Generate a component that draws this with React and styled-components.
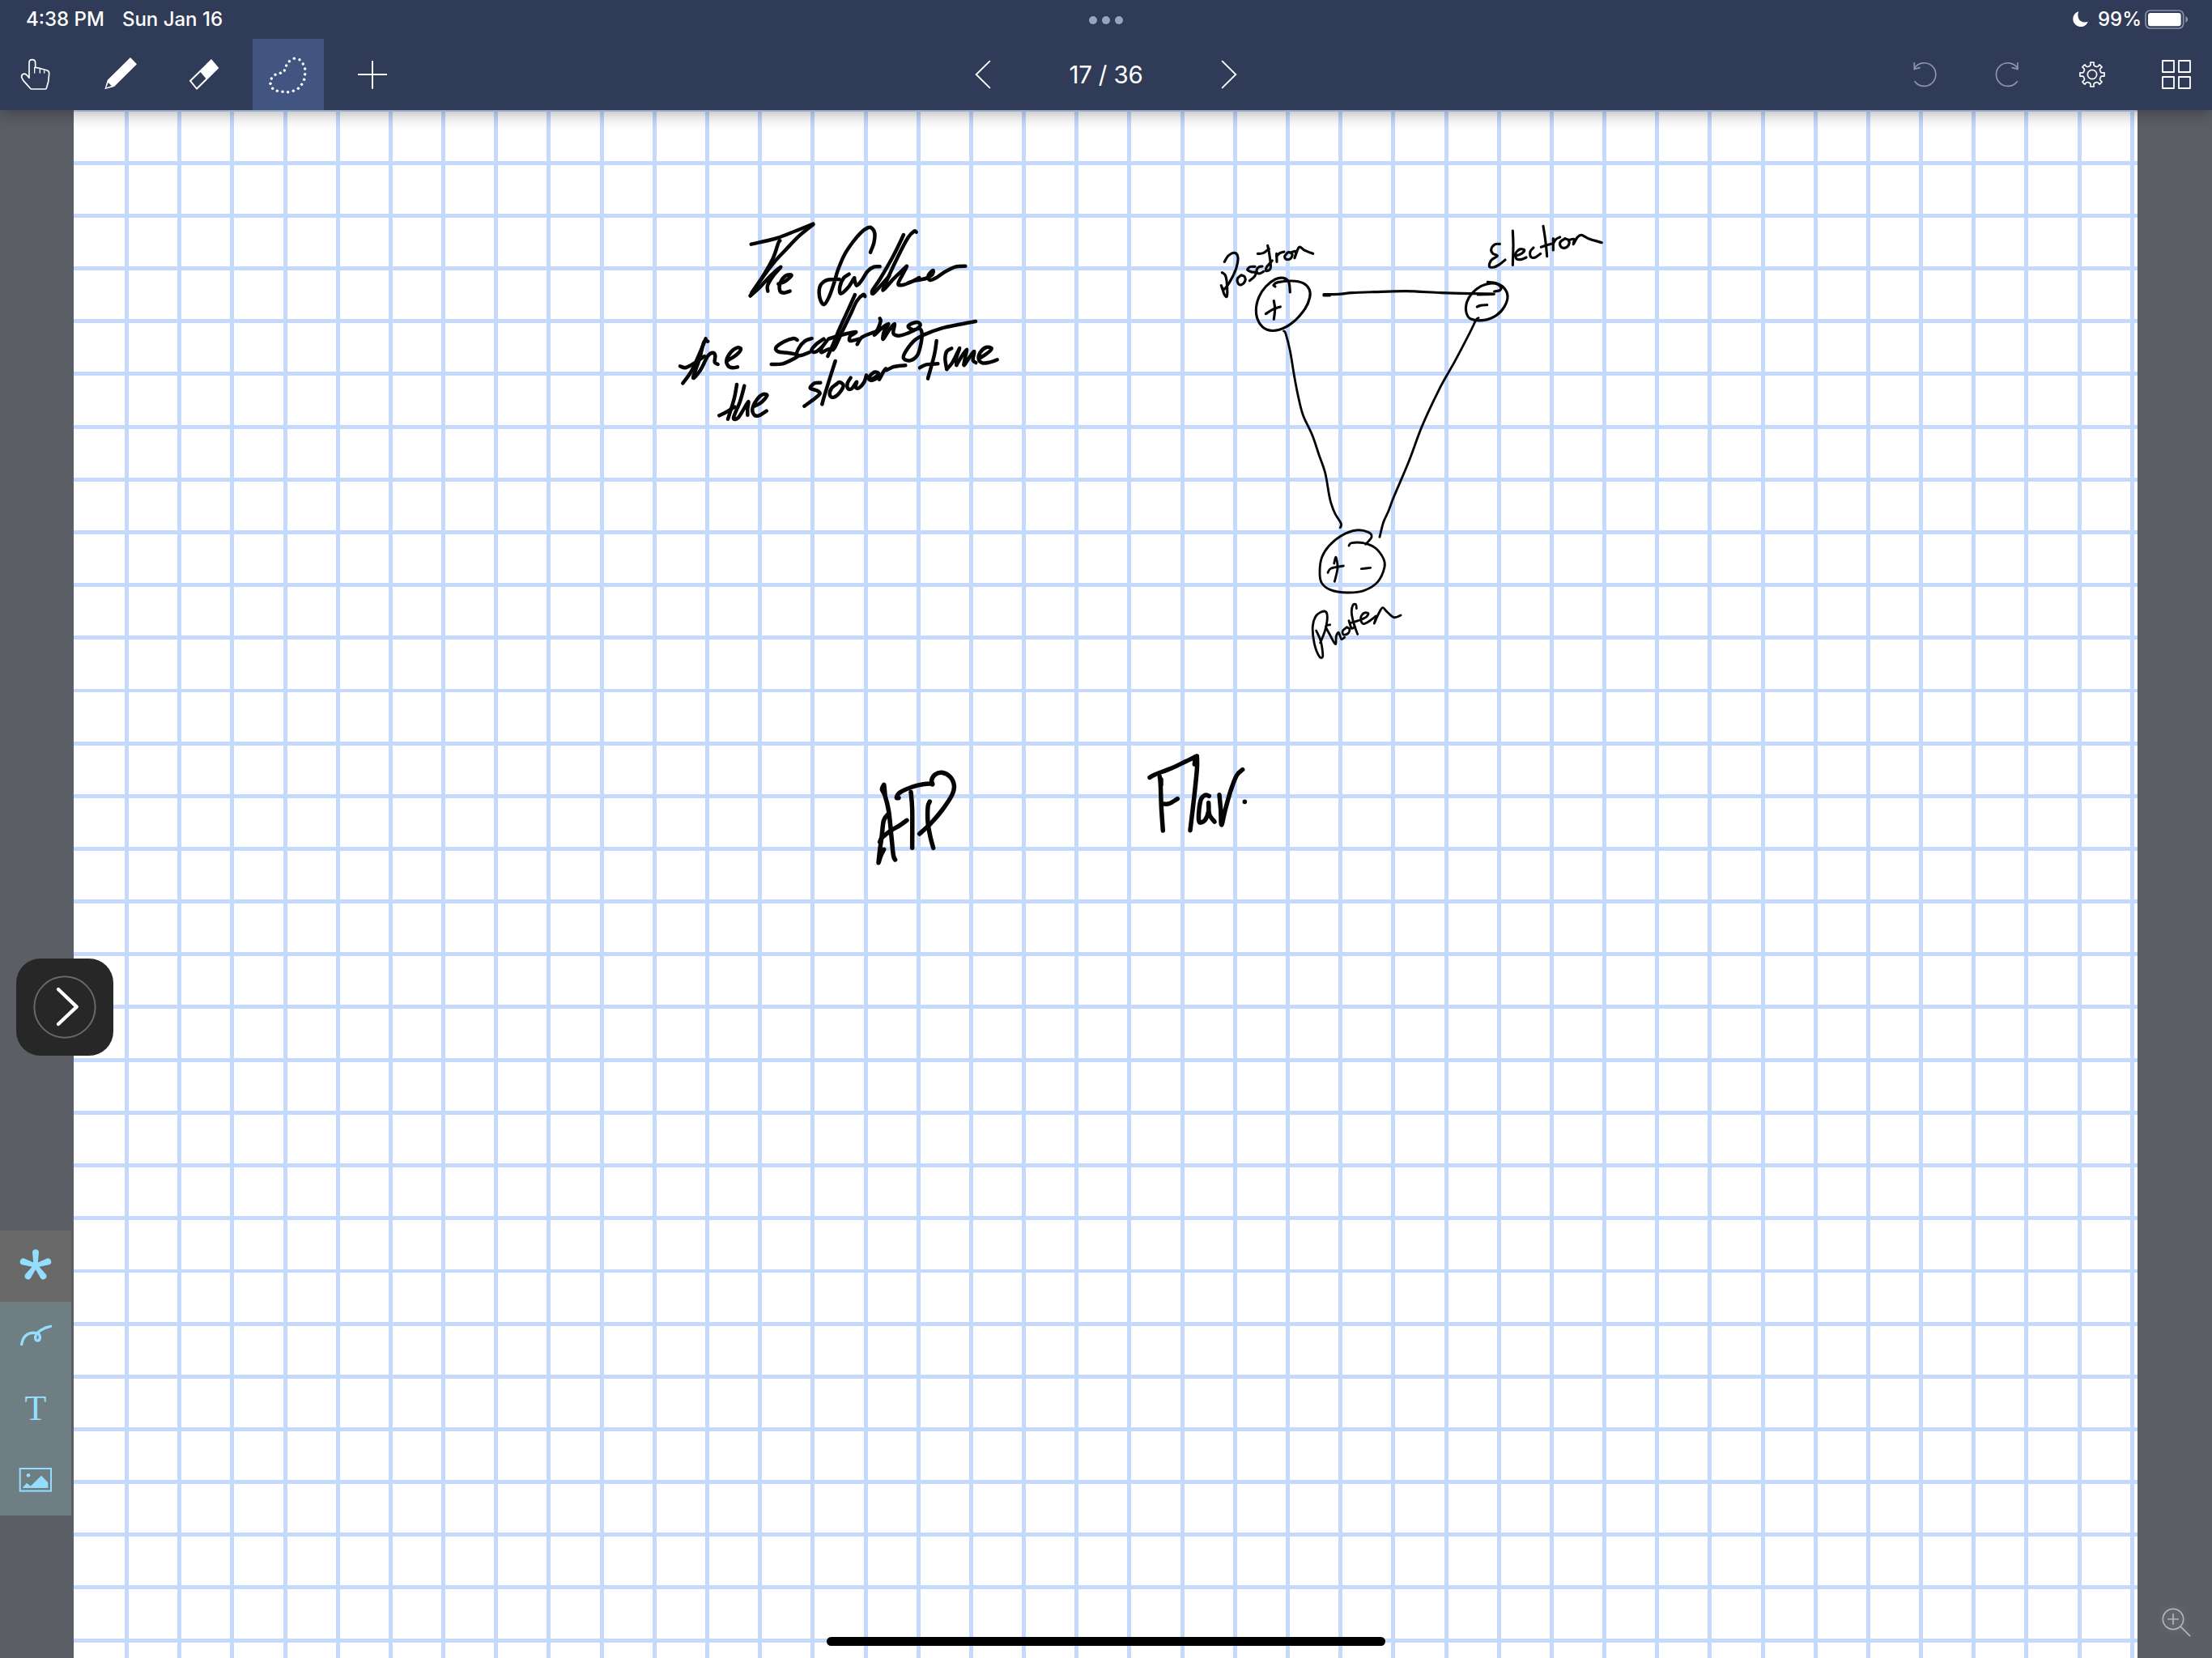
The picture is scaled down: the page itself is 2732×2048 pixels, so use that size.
import React from "react";
import styled, { createGlobalStyle, css } from "styled-components";

const GlobalStyle = createGlobalStyle`
  * { box-sizing: border-box; }
  body { margin: 0; overflow: hidden; background: #5c5e66; }
`;

const Screen = styled.div`
  position: relative;
  display: flex;
  flex-direction: column;
  width: 2732px;
  height: 2048px;
  overflow: hidden;
  font-family: Inter, "Liberation Sans", sans-serif;
  color: #fff;
`;

const Header = styled.header`
  position: relative;
  z-index: 2;
  flex: none;
  height: 136px;
  background: #303b57;
  box-shadow: 0 4px 20px rgba(0, 0, 0, 0.32);
`;

const StatusBar = styled.div`
  display: grid;
  grid-template-columns: 1fr auto 1fr;
  align-items: center;
  height: 48px;
  padding: 0 29px 0 32px;
`;

const StatusGroup = styled.div`
  display: flex;
  align-items: center;
  gap: ${(p) => p.$gap || 0}px;
  ${(p) => p.$end && css`justify-content: flex-end;`}
`;

const StatusText = styled.span`
  font-size: 24px;
  line-height: 48px;
  font-weight: 450;
  white-space: nowrap;
`;

const Dots = styled.div`
  display: flex;
  gap: 6px;
  padding: 2px 3px 0 0;
`;

const Dot = styled.i`
  width: 10px;
  height: 10px;
  border-radius: 50%;
  background: #98a4c2;
`;

const Toolbar = styled.div`
  display: grid;
  grid-template-columns: 1fr auto 1fr;
  height: 88px;
`;

const ToolGroup = styled.nav`
  display: flex;
  gap: 16px;
  ${(p) => p.$end && css`justify-content: flex-end;`}
`;

const PageNav = styled.div`
  display: flex;
  align-items: center;
`;

const PageCount = styled.span`
  width: 216px;
  text-align: center;
  font-size: 29.5px;
  font-weight: 400;
  letter-spacing: -0.2px;
  line-height: 88px;
`;

const ToolButton = styled.button`
  width: 88px;
  height: 88px;
  padding: 0;
  border: 0;
  display: block;
  color: ${(p) => (p.$muted ? "#9096a6" : "#fff")};
  background: ${(p) => (p.$active ? "#425480" : "transparent")};
`;

const Glyph = styled.svg`
  display: block;
  width: 88px;
  height: 88px;
  fill: none;
  stroke: currentColor;
  stroke-width: ${(p) => p.$weight || 5};
`;

const Workspace = styled.main`
  display: flex;
  flex: 1;
  min-height: 0;
`;

const Rail = styled.aside`
  display: flex;
  flex-direction: column;
  justify-content: flex-end;
  flex: none;
  width: ${(p) => p.$width}px;
  padding-bottom: ${(p) => p.$bottom || 0}px;
  background: #5c5e66;
`;

const Paper = styled.section`
  flex: none;
  width: 2549px;
  height: 1912px;
  background: #fff;
`;

const PaperDrawing = styled.svg`
  display: block;
`;

const LayerButton = styled.button`
  display: flex;
  align-items: center;
  justify-content: center;
  width: 88px;
  height: 88px;
  padding: 0;
  border: 0;
  color: #93defe;
  background: ${(p) => (p.$selected ? "#696969" : "#6f7e83")};
`;

const LetterT = styled.span`
  font-family: "Liberation Serif", "Times New Roman", serif;
  font-size: 44px;
  line-height: 88px;
`;

const ZoomButton = styled(ToolButton)`
  align-self: flex-end;
  color: #b5b5b5;
  filter: drop-shadow(0 0 5px rgba(255, 255, 255, 0.2));
`;

const Handle = styled.button`
  position: absolute;
  z-index: 3;
  left: 20px;
  top: 1184px;
  width: 120px;
  height: 120px;
  padding: 0;
  border: 0;
  border-radius: 30px;
  background: #272727;
`;

const HomeIndicator = styled.div`
  position: absolute;
  z-index: 3;
  left: 1021px;
  bottom: 15px;
  width: 690px;
  height: 11px;
  border-radius: 6px;
  background: #000;
`;

/* Graph paper */
const PITCH = 65.18;
const COLS = Array.from({ length: 39 }, (_, n) => Math.round(154 + n * PITCH));
const ROWS = Array.from({ length: 30 }, (_, i) => {
  const n = i - 1;
  const thin = n === 10 || n === 21;
  return { y: Math.round(198.6 + n * PITCH) + (thin ? 1 : 0), h: thin ? 4 : 5 };
});

/* Pen strokes, each a list of sampled points in thirds of a pixel */
const NOTES = [
  {
    x: 820, y: 250, w: 13.5,
    strokes: [
      "323,155 350,149 420,132 490,105 553,80",
      "553,82 500,125 450,177 410,220 370,272 320,346",
      "430,142 424,150 405,205 370,268 325,335",
      "320,346 352,318 395,272 433,239 405,272 384,308 385,329",
      "424,302 450,292 473,270 452,271 431,298 430,328 445,335 467,329",
      "765,185 778,150 781,115 770,95 755,94 730,112 700,147 670,192 645,250 630,300 612,350 594,378 580,362 575,330 582,304 604,288 650,285",
      "686,266 666,280 652,312 655,338 682,316 704,282 706,285 714,308 732,290 755,255 778,239 800,238",
      "888,120 850,198 800,285 773,325 775,338 800,312 835,272",
      "935,110 927,107 905,130 870,195 830,280 812,326 850,284 885,250 900,237 884,268 868,302 885,306 918,294 946,279",
      "905,298 930,290 970,282 994,268 997,252 980,270 985,288 1008,280 1040,258 1080,239 1117,236",
      "155,505 132,560 102,625 70,670",
      "60,607 82,612 118,592 150,570",
      "163,515 148,518 132,580 108,650 135,622 162,570 180,557 190,567 188,592 200,600",
      "235,586 265,568 285,545 272,538 248,555 232,585 238,606 255,613 273,610",
      "494,510 480,504 445,516 415,538 424,553 462,558 497,566 480,580 440,598 398,600",
      "548,504 522,514 500,540 492,566 512,566 540,555",
      "592,506 565,525 547,548 562,554 586,535 604,512 584,540 584,556 604,546 620,542",
      "708,342 684,395 652,465 625,530 607,570",
      "745,348 738,342 715,365 690,418 660,480 632,540 622,546",
      "610,506 655,492 711,480 690,496 690,513 722,506",
      "716,526 732,501 765,486 790,478",
      "800,430 803,440 794,466 780,492 802,470 832,450 816,478 812,507 834,474 855,450 850,485 872,494 905,484 938,468 950,454 940,444 918,449 905,460 922,472 948,468 956,485 954,515 940,565 912,586 888,578 896,552 930,510 970,488 1030,466 1090,453 1155,441",
      "270,675 262,720 250,762 237,803",
      "205,790 232,776 262,758",
      "298,680 282,738 258,798 275,798 297,764 313,738 310,765 310,788",
      "331,757 360,742 382,716 365,712 343,733 328,765 335,788 352,790 380,773",
      "580,668 558,670 542,688 566,697 578,708 560,726 520,755",
      "635,588 620,635 595,715 586,748",
      "641,672 620,690 615,715 630,722 652,704 665,678 650,666 638,675",
      "692,650 680,670 682,690 696,690 714,665 710,685 722,688 742,666 750,640",
      "760,656 780,650 795,634 780,629 760,648 768,660 796,648",
      "798,656 812,630 822,616 824,622 848,610 870,606 895,604",
      "1010,513 1002,565 978,653",
      "948,613 972,601 1015,598",
      "1066,541 1048,552 1042,580 1048,618",
      "1048,618 1066,598 1080,572 1096,540 1084,575 1084,603",
      "1084,603 1102,572 1122,545 1116,575 1112,604 1132,574 1150,552 1145,584 1156,594",
      "1168,578 1194,562 1214,542 1194,537 1172,556 1166,580 1180,595 1205,593 1235,583",
    ],
  },
  {
    x: 1480, y: 260, w: 9.5,
    strokes: [
      "97,190 112,167 135,157 147,175 140,215 118,262 94,293 85,278",
      "88,230 100,240 106,270 106,318 95,308 90,288",
      "158,240 145,253 148,271 160,275 173,262 172,246 160,240",
      "210,208 192,209 182,220 198,228 212,230 208,245 190,260",
      "237,207 222,211 216,226 226,234 242,226",
      "257,130 263,160 268,212 252,224 253,210 274,186",
      "220,160 240,158 262,142",
      "290,160 291,190",
      "290,170 302,158 318,153",
      "331,156 320,170 326,181 342,178 348,162 335,154",
      "345,155 362,152 357,176 368,145 376,135 395,148 425,160",
      "285,282 279,276 295,266 345,261 388,269 411,292 413,322 395,365 350,415 300,442 255,442 225,415 214,370 225,320 250,282 285,255 315,250 335,265 340,303",
      "280,335 284,365 280,403",
      "250,383 275,367 304,357",
      "465,311 520,310 570,305 650,302 770,299 900,305 1020,308 1095,309",
      "465,315 487,315",
      "1072,265 1103,269 1132,286 1146,317 1135,355 1105,388 1060,406 1010,402 993,378 995,340 1015,306 1048,280 1085,270 1110,274 1122,287 1115,297 1097,300",
      "1033,357 1045,352 1070,350",
      "1036,312 1095,310",
      "1117,124 1098,126 1085,145 1092,160 1108,168 1086,184 1078,206 1095,210 1116,200 1137,183",
      "1165,75 1167,130 1165,202",
      "1178,168 1200,158 1208,146 1190,144 1175,162 1180,180 1198,181 1215,174",
      "1242,138 1230,152 1232,172 1248,174 1268,160",
      "1278,58 1284,95 1289,135 1292,170",
      "1270,136 1292,128 1315,122",
      "1315,104 1315,147",
      "1315,122 1326,106 1340,99",
      "1360,104 1342,116 1342,132 1356,139 1372,128 1372,110 1358,104",
      "1372,110 1392,106 1390,125 1404,100 1420,91 1450,106 1495,119",
    ],
  },
  {
    x: 1540, y: 380, w: 8.5,
    strokes: [
      "137,87 144,97 160,160 175,250 190,328 208,398 242,472 267,545 290,612 304,690 311,722 326,762 349,800 346,815",
      "858,38 849,46 825,95 770,200 715,298 650,437 600,570 545,700 525,753 506,795 492,850",
      "378,882 388,872 430,872 475,890 506,930 510,962 485,1016 435,1048 372,1056 310,1046 276,1018 270,975 278,925 305,882 350,845 405,825 450,832 462,850 440,877",
      "323,948 330,925 336,965 325,1015",
      "300,982 312,966 358,957",
      "424,968 458,964",
      "257,1197 270,1225 277,1250 281,1293 268,1292 250,1245 244,1180 258,1140 288,1125 298,1145 290,1195 272,1242",
      "308,1175 293,1182 308,1213 328,1247 331,1218 340,1204 350,1228 362,1222",
      "370,1184 355,1198 358,1212 374,1208 381,1192 370,1184",
      "406,1115 404,1100 393,1102 388,1130 396,1170 410,1210",
      "378,1160 388,1188 400,1182",
      "385,1168 412,1160 440,1148 450,1133 434,1132 422,1150 428,1170 444,1168 478,1143",
      "480,1145 472,1170 488,1134 503,1112 520,1128 545,1148 570,1140",
    ],
  },
  {
    x: 1060, y: 900, w: 16.5,
    strokes: [
      "95,208 88,225 99,248 113,306 122,390 130,468 137,486",
      "96,212 99,242",
      "108,320 94,342 87,400 80,450 75,497",
      "77,492 84,470 95,448",
      "80,420 88,404 122,377 150,361 180,340",
      "150,257 142,255 155,236 200,216 240,206 275,204",
      "195,235 200,300 200,442",
      "275,207 272,190 285,170 310,163 340,178 355,210 348,245 310,303 268,352 227,390",
      "265,270 258,290 258,348 267,400 278,442",
      "1080,181 1100,170 1160,147 1215,121 1253,103",
      "1117,178 1120,205 1123,290 1129,378",
      "1122,188 1122,208",
      "1130,279 1152,278 1183,260",
      "1255,102 1255,150 1245,250 1230,377",
      "1246,132 1249,104",
      "1300,250 1286,246 1270,262 1263,300 1262,340 1270,348 1287,336 1298,305 1298,275 1301,318 1320,345",
      "1338,245 1343,300 1346,357 1360,300 1380,230 1402,174 1424,152",
      "1432,271 1432,271.5",
    ],
  },
];

/* Passes a smooth curve through the sampled points of one stroke */
function smooth(stroke) {
  const p = stroke.split(" ").map((s) => s.split(",").map(Number));
  let d = `M${p[0][0]} ${p[0][1]}`;
  for (let i = 0; i < p.length - 1; i++) {
    const a = p[i - 1] || p[i];
    const b = p[i];
    const c = p[i + 1];
    const e = p[i + 2] || c;
    d += `C${b[0] + (c[0] - a[0]) / 6} ${b[1] + (c[1] - a[1]) / 6} ${c[0] - (e[0] - b[0]) / 6} ${c[1] - (e[1] - b[1]) / 6} ${c[0]} ${c[1]}`;
  }
  return d;
}

function gearPath(cx, cy) {
  const pts = [];
  for (let i = 0; i < 8; i++) {
    [[-15, 33], [-9.5, 36], [-8, 45.5], [8, 45.5], [9.5, 36], [15, 33]].forEach(([deg, r]) => {
      const a = ((i * 45 + deg - 90) * Math.PI) / 180;
      pts.push(`${(cx + r * Math.cos(a)).toFixed(1)} ${(cy + r * Math.sin(a)).toFixed(1)}`);
    });
  }
  return `M${pts.join("L")}Z`;
}

const LASSO = [
  [1090, 217], [1110, 221], [1123, 237], [1130, 255], [1130, 275], [1127, 295], [1118, 313],
  [1105, 328], [1087, 337], [1067, 341], [1047, 340], [1027, 337], [1010, 328], [1002, 310],
  [1006, 291], [1020, 277], [1039, 271], [1054, 261], [1061, 243], [1072, 227],
];

const HandIcon = () => (
  <Glyph viewBox="0 144 264 264" strokeLinejoin="round" strokeLinecap="round">
    <path d="M108 289V233Q108 221 119 221Q131 221 131 233V250L143 252L175 261Q183 264 182 273L179 303L172 327Q171 330 167 330H119Q114 330 111 326L86 298L80 286Q79 277 87 274Q94 272 100 279L108 289" />
    <path d="M128 250V270M148 256V270M164 263V270" strokeWidth="4" />
  </Glyph>
);

const PencilIcon = () => (
  <Glyph viewBox="312 144 264 264" stroke="none">
    <path fill="currentColor" fillRule="evenodd" stroke="none" d="M483 213L507 238L423 321L388 331L398 297ZM401 306L413 318L394 325Z" />
  </Glyph>
);

const EraserIcon = () => (
  <Glyph viewBox="624 144 264 264">
    <path fill="currentColor" fillRule="evenodd" stroke="none" d="M783 219L811 252L729 333L701 299ZM743 267L763 291L729 325L709 300Z" />
  </Glyph>
);

const LassoIcon = () => (
  <Glyph viewBox="936 144 264 264">
    {LASSO.map(([x, y]) => (
      <circle key={`${x}-${y}`} cx={x} cy={y} r="5.2" fill="currentColor" stroke="none" />
    ))}
  </Glyph>
);

const PlusIcon = () => (
  <Glyph viewBox="1248 144 264 264" $weight={6}>
    <path d="M1380 225V329M1326 276H1434" />
  </Glyph>
);

const Chevron = ({ back }) => (
  <Glyph viewBox={back ? "30 144 264 264" : "942 144 264 264"} strokeLinecap="round" $weight={5.5}>
    <path d={back ? "M187 227L137 276L187 325" : "M1049 227L1099 276L1049 325"} />
  </Glyph>
);

const TurnIcon = ({ forward }) => (
  <Glyph viewBox="96 144 264 264" strokeLinecap="round">
    <g transform={forward ? "translate(457 0) scale(-1 1)" : undefined}>
      <path d="M195 302A43 43 0 1 0 194 252" />
      <path d="M193 233V256L213 251" />
    </g>
  </Glyph>
);

const GearIcon = () => (
  <Glyph viewBox="720 144 264 264" strokeLinejoin="round">
    <path d={gearPath(852, 276)} />
    <circle cx="852" cy="276" r="17" />
  </Glyph>
);

const PagesIcon = () => (
  <Glyph viewBox="1032 144 264 264" strokeLinejoin="round" $weight={5.5}>
    {[1113, 1173].map((x) => [225, 285].map((y) => <rect key={`${x}${y}`} x={x} y={y} width="42" height="42" />))}
  </Glyph>
);

const StatusIcon = styled.svg`
  display: block;
  flex: none;
  margin-left: ${(p) => p.$left || 0}px;
`;

const BatteryLevel = styled(StatusText)`
  margin-left: 11px;
`;

export default function App() {
  return (
    <Screen>
      <GlobalStyle />
      <Header>
        <StatusBar>
          <StatusGroup $gap={22}>
            <StatusText>4:38 PM</StatusText>
            <StatusText>Sun Jan 16</StatusText>
          </StatusGroup>
          <Dots><Dot /><Dot /><Dot /></Dots>
          <StatusGroup $end>
            <StatusIcon width="20" height="20" viewBox="782 42 60 60">
              <path fill="#fff" d="M804 43C788 47 780 64 784 78C789 95 806 102 820 98C829 95 836 88 838 80C826 85 812 82 805 71C800 62 800 51 804 43Z" />
            </StatusIcon>
            <BatteryLevel>99%</BatteryLevel>
            <StatusIcon $left={4} width="54" height="24" viewBox="1046 36 162 72">
              <rect x="1049" y="39" width="140" height="66" rx="17" fill="none" stroke="#8c92a3" strokeWidth="5" />
              <rect x="1058" y="48" width="122" height="49" rx="9" fill="#fff" />
              <path d="M1197 60Q1206 64 1206 72Q1206 80 1197 84Z" fill="#8c92a3" />
            </StatusIcon>
          </StatusGroup>
        </StatusBar>
        <Toolbar>
          <ToolGroup>
            <ToolButton><HandIcon /></ToolButton>
            <ToolButton><PencilIcon /></ToolButton>
            <ToolButton><EraserIcon /></ToolButton>
            <ToolButton $active><LassoIcon /></ToolButton>
            <ToolButton><PlusIcon /></ToolButton>
          </ToolGroup>
          <PageNav>
            <ToolButton><Chevron back /></ToolButton>
            <PageCount>17 / 36</PageCount>
            <ToolButton><Chevron /></ToolButton>
          </PageNav>
          <ToolGroup $end>
            <ToolButton $muted><TurnIcon /></ToolButton>
            <ToolButton $muted><TurnIcon forward /></ToolButton>
            <ToolButton><GearIcon /></ToolButton>
            <ToolButton><PagesIcon /></ToolButton>
          </ToolGroup>
        </Toolbar>
      </Header>
      <Workspace>
        <Rail $width={91} $bottom={176}>
          <LayerButton $selected>
            <Glyph viewBox="0 60 264 264">
              {[0, 72, 144, 216, 288].map((a) => (
                <path key={a} fill="currentColor" stroke="none" transform={`translate(132 190) rotate(${a})`} d="M-7 2L-12 -48A12 12 0 0 1 12 -48L7 2Z" />
              ))}
            </Glyph>
          </LayerButton>
          <LayerButton>
            <Glyph viewBox="0 324 264 264" strokeLinecap="round" $weight={10}>
              <path d="M80 482Q84 455 102 444Q118 436 136 440Q149 444 148 457Q147 468 138 468Q130 466 131 454Q133 441 150 430Q168 418 188 415" />
            </Glyph>
          </LayerButton>
          <LayerButton><LetterT>T</LetterT></LayerButton>
          <LayerButton>
            <Glyph viewBox="0 852 264 264" $weight={6}>
              <rect x="74" y="942" width="115" height="83" />
              <circle cx="105" cy="967" r="7" fill="currentColor" stroke="none" />
              <path fill="currentColor" stroke="none" d="M83 1014L99 995L113 1007L153 968L178 994V1014Z" />
            </Glyph>
          </LayerButton>
        </Rail>
        <Paper>
          <PaperDrawing width="2549" height="1912" viewBox="91 136 2549 1912">
            <g fill="#c5d9fd">
              {COLS.map((x) => <rect key={x} x={x} y="136" width="5" height="1912" />)}
              {ROWS.map(({ y, h }) => <rect key={y} x="91" y={y} width="2549" height={h} />)}
            </g>
            {NOTES.map((note) => (
              <g
                key={note.x}
                transform={`translate(${note.x} ${note.y}) scale(${1 / 3})`}
                fill="none"
                stroke="#050505"
                strokeWidth={note.w}
                strokeLinecap="round"
                strokeLinejoin="round"
              >
                {note.strokes.map((s) => <path key={s} d={smooth(s)} />)}
              </g>
            ))}
          </PaperDrawing>
        </Paper>
        <Rail $width={92}>
          <ZoomButton>
            <Glyph viewBox="252 180 264 264" strokeLinecap="round">
              <circle cx="372" cy="300" r="38" />
              <path d="M400 328L434 362M353 300H391M372 281V319" />
            </Glyph>
          </ZoomButton>
        </Rail>
      </Workspace>
      <Handle>
        <svg width="120" height="120" viewBox="60 72 360 360" fill="none">
          <circle cx="240" cy="252" r="113" stroke="#686868" strokeWidth="6" />
          <path d="M216 186L284 251L216 315" stroke="#fff" strokeWidth="13" strokeLinecap="round" strokeLinejoin="round" />
        </svg>
      </Handle>
      <HomeIndicator />
    </Screen>
  );
}
